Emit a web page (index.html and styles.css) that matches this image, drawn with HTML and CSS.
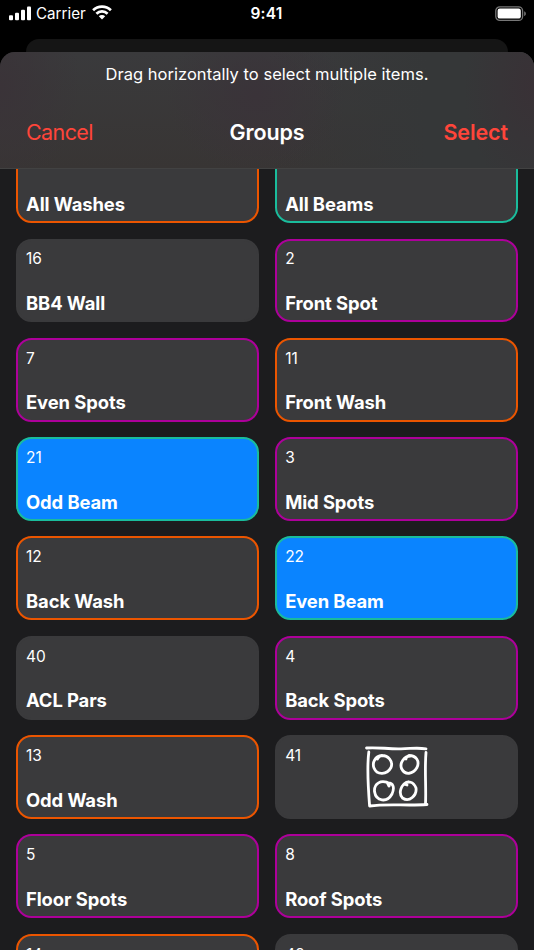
FILE: index.html
```html
<!DOCTYPE html>
<html lang="en">
<head>
<meta charset="utf-8">
<title>Groups</title>
<link rel="stylesheet" href="styles.css">
</head>
<body>
<div class="screen">
  <div class="status">
    <div class="carrier">
      <svg class="signal" width="23" height="15" viewBox="0 0 23 15" fill="#fff"><rect x="0" y="9.3" width="4" height="5" rx="1"/><rect x="6" y="6.8" width="4" height="7.5" rx="1"/><rect x="12" y="3.8" width="4" height="10.5" rx="1"/><rect x="18" y="0.6" width="4" height="13.7" rx="1"/></svg>
      <span class="carrier-name">Carrier</span>
      <svg class="wifi" width="20" height="15" viewBox="0 0 20 15" fill="none" stroke="#fff" stroke-width="2.7"><path d="M1.1 5.2a12.8 12.8 0 0 1 17.8 0"/><path d="M4.4 8.7a8 8 0 0 1 11.2 0"/><path d="M10 14.5 6.8 11.2a4.6 4.6 0 0 1 6.4 0Z" fill="#fff" stroke="none"/></svg>
    </div>
    <span class="time">9:41</span>
    <svg class="battery" width="32" height="16" viewBox="0 0 32 16"><rect x=".8" y=".8" width="26.8" height="13.6" rx="4" fill="none" stroke="#777" stroke-width="1.3"/><rect x="2.6" y="2.6" width="23.2" height="10" rx="2.2" fill="#fff"/><path d="M29.2 5.2c2.2.8 2.2 4 0 4.8z" fill="#777"/></svg>
  </div>
  <div class="back-sheet"></div>
  <main class="sheet">
    <header class="header">
      <p class="hint">Drag horizontally to select multiple items.</p>
      <div class="nav">
        <span class="cancel">Cancel</span>
        <h1 class="title">Groups</h1>
        <span class="select">Select</span>
      </div>
    </header>
    <div class="list">
      <div class="grid">
        <div class="card orange"><span class="name">All Washes</span></div>
        <div class="card teal"><span class="name">All Beams</span></div>
        <div class="card"><span class="num">16</span><span class="name">BB4 Wall</span></div>
        <div class="card purple"><span class="num">2</span><span class="name">Front Spot</span></div>
        <div class="card purple"><span class="num">7</span><span class="name">Even Spots</span></div>
        <div class="card orange"><span class="num">11</span><span class="name">Front Wash</span></div>
        <div class="card teal selected"><span class="num">21</span><span class="name">Odd Beam</span></div>
        <div class="card purple"><span class="num">3</span><span class="name">Mid Spots</span></div>
        <div class="card orange"><span class="num">12</span><span class="name">Back Wash</span></div>
        <div class="card teal selected"><span class="num">22</span><span class="name">Even Beam</span></div>
        <div class="card"><span class="num">40</span><span class="name">ACL Pars</span></div>
        <div class="card purple"><span class="num">4</span><span class="name">Back Spots</span></div>
        <div class="card orange"><span class="num">13</span><span class="name">Odd Wash</span></div>
        <div class="card"><span class="num">41</span>
          <svg class="sketch" width="66" height="66" viewBox="0 0 66 66" fill="none" stroke="#fff" stroke-width="2.8" stroke-linecap="round" stroke-linejoin="round"><path d="M2.5 4C14 3 24 5.200 37 4.800S54 3.600 62 4.800M4.800 8C3 22 4 42 5.600 62C23 59.500 43 62 63 60.500M62 8.500C60.500 25 62.300 43 61.500 60"/><path d="M18 11.500C11 12 8 19 10 24C13 31.500 23 31 27 23.500C29.500 17 24 11.500 18 11.500Q14.500 12.500 13.500 15M46.500 12C40 12 35.500 19 37.500 24.500C41 31.500 49 30.500 53 23.500C56 17 52 11.500 45 11.500Q42 13 42 15M26.500 40C16.500 34.500 10 40 10.500 47.500C12 57.500 23 59 28 50C31 43 29 38.500 23.500 39L25 42M44 38C37 40 34 49 38.500 54C45.500 59 53 51 52 44C49.500 37.500 44 36.500 40 40L43 41"/></svg>
        </div>
        <div class="card purple"><span class="num">5</span><span class="name">Floor Spots</span></div>
        <div class="card purple"><span class="num">8</span><span class="name">Roof Spots</span></div>
        <div class="card orange"><span class="num">14</span></div>
        <div class="card"><span class="num">42</span></div>
      </div>
    </div>
  </main>
</div>
</body>
</html>
```
FILE: styles.css
```css
* { box-sizing: border-box; }
body {
  margin: 0;
  background: #000;
  color: #fff;
  font-family: Inter, "Liberation Sans", sans-serif;
}
.screen {
  height: 950px;
  display: flex;
  flex-direction: column;
  overflow: hidden;
}
.status {
  height: 39px;
  flex: none;
  display: grid;
  grid-template-columns: 1fr auto 1fr;
  align-items: start;
  padding: 6px 7px 0 9px;
}
.carrier { display: flex; }
.carrier-name {
  font-size: 15.2px;
  line-height: 16px;
  margin-left: 4px;
}
.wifi { margin-left: 6px; margin-top: -1px; }
.time {
  margin-right: 3px;
  font-size: 15.5px;
  line-height: 16px;
  font-weight: 600;
  letter-spacing: 0.2px;
}
.battery { justify-self: end; }
.back-sheet {
  height: 13px;
  flex: none;
  margin: 0 26px;
  border-radius: 13px 13px 0 0;
  background: #151515;
}
.sheet {
  flex: 1;
  min-height: 0;
  display: flex;
  flex-direction: column;
}
.header {
  height: 117px;
  flex: none;
  border-radius: 15px 15px 0 0;
  border-bottom: 1px solid #424242;
  background:
    radial-gradient(ellipse 90px 80px at 48% 38%, #3a3339, transparent),
    radial-gradient(ellipse 70px 110px at 100% 30%, #393136, transparent),
    radial-gradient(ellipse 80px 110px at 0 30%, #3a3338, transparent),
    linear-gradient(90deg, transparent 50%, #353738 80%),
    linear-gradient(#3a3a3c, #383534);
}
.hint {
  margin: 0;
  padding-top: 12px;
  text-align: center;
  font-size: 16.5px;
  line-height: 20px;
  letter-spacing: 0.03px;
}
.nav {
  display: grid;
  grid-template-columns: 1fr auto 1fr;
  align-items: center;
  padding: 0 26px;
  margin-top: 34px;
  font-size: 21.5px;
  line-height: 28px;
}
.cancel { color: #ff453a; letter-spacing: -0.6px; }
.title { margin: 0; font-size: inherit; font-weight: 600; letter-spacing: -0.1px; }
.select { color: #ff453a; font-weight: 600; text-align: right; letter-spacing: -0.1px; }
.list {
  flex: 1;
  min-height: 0;
  overflow: hidden;
  background: #1c1c1e;
}
.grid {
  display: grid;
  grid-template-columns: 1fr 1fr;
  grid-auto-rows: 83.8px;
  gap: 15.53px;
  padding: 0 15.6px;
  margin-top: -29.8px;
}
.card {
  position: relative;
  display: flex;
  flex-direction: column;
  padding: 8.8px 8.4px 5.2px;
  border: 2px solid #3a3a3c;
  border-radius: 15.5px;
  background: #3a3a3c;
}
.orange { border-color: #eb5500; }
.teal { border-color: #1abc9c; }
.purple { border-color: #ad009a; }
.selected { background: #0a84ff; }
.num { font-size: 15.5px; line-height: 19px; }
.name {
  margin-top: auto;
  font-size: 18.4px;
  line-height: 23px;
  font-weight: 650;
  letter-spacing: -0.08px;
}
.sketch { position: absolute; left: 87px; top: 7px; }
```
